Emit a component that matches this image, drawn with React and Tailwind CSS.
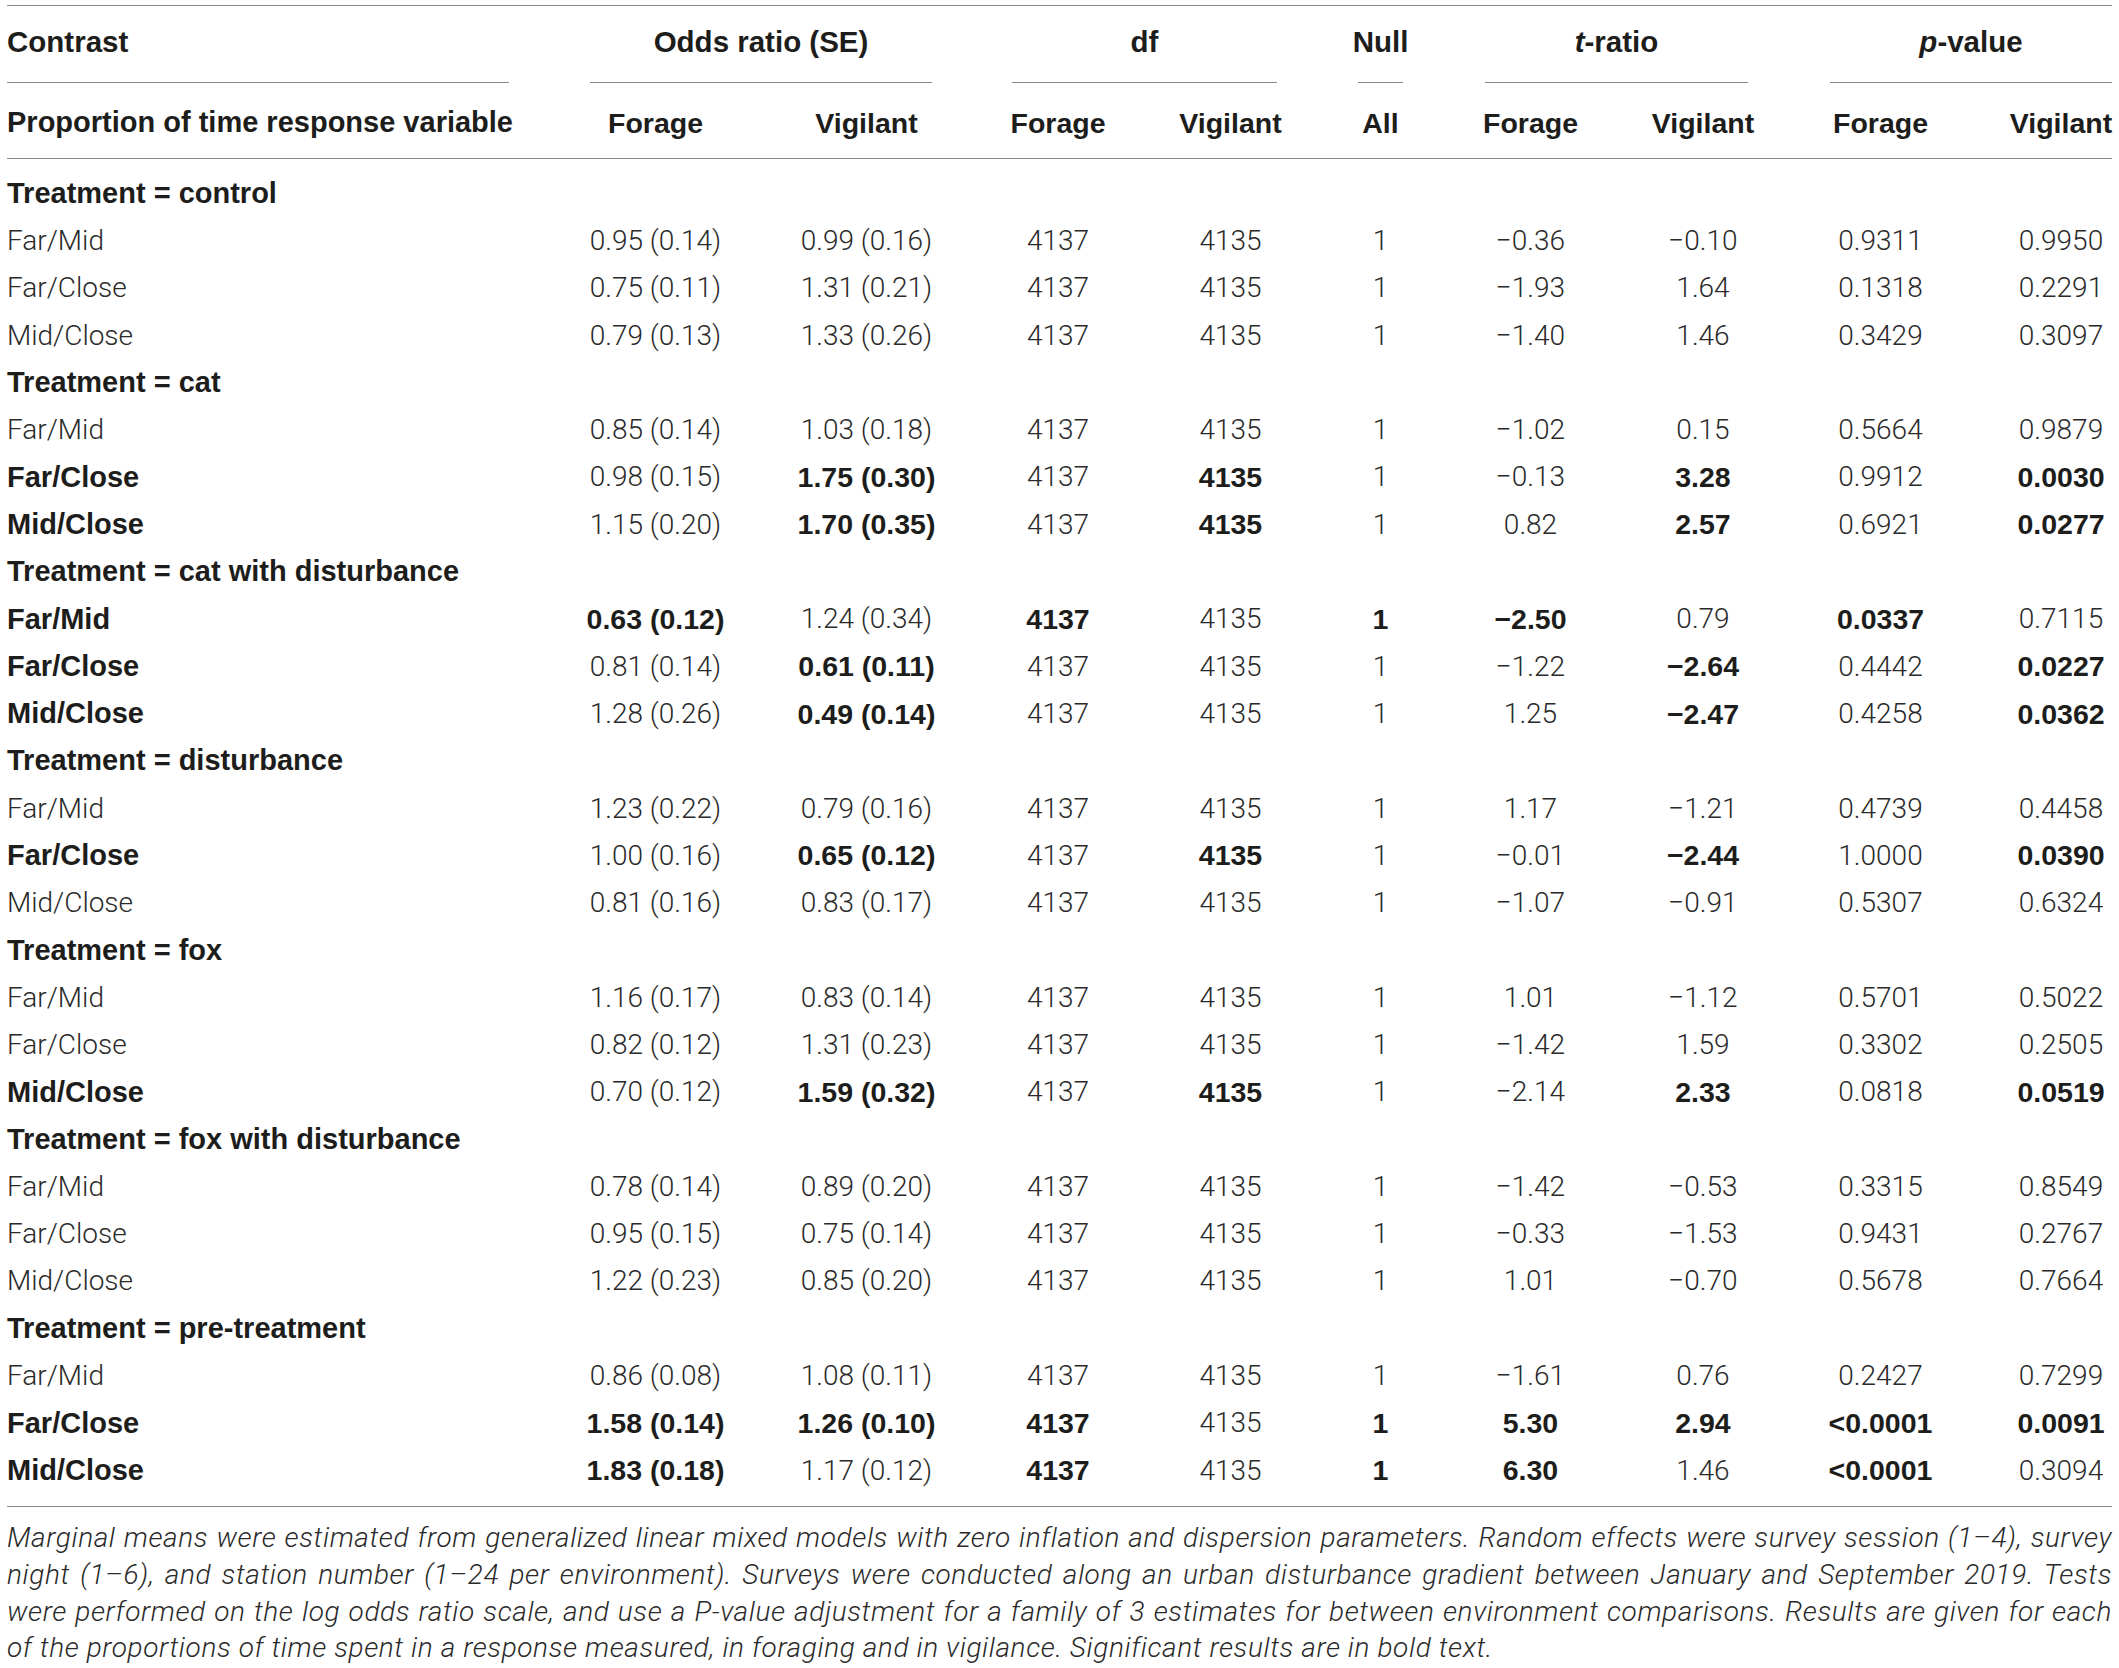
import clsx from "clsx";

const cols =
  "grid grid-cols-[550px_211px_211px_172px_173px_127px_173px_172px_183px_147px]";
const bold = "font-['Liberation_Sans',Arial,sans-serif] font-bold text-[#1d1d1b]";
const light = "font-['Roboto','Liberation_Sans',sans-serif] font-light text-[#2a2a2a]";

// a leading "*" marks a significant (bold) value
const groups = [
  {
    name: "control",
    rows: [
      ["Far/Mid", "0.95 (0.14)", "0.99 (0.16)", "4137", "4135", "1", "−0.36", "−0.10", "0.9311", "0.9950"],
      ["Far/Close", "0.75 (0.11)", "1.31 (0.21)", "4137", "4135", "1", "−1.93", "1.64", "0.1318", "0.2291"],
      ["Mid/Close", "0.79 (0.13)", "1.33 (0.26)", "4137", "4135", "1", "−1.40", "1.46", "0.3429", "0.3097"],
    ],
  },
  {
    name: "cat",
    rows: [
      ["Far/Mid", "0.85 (0.14)", "1.03 (0.18)", "4137", "4135", "1", "−1.02", "0.15", "0.5664", "0.9879"],
      ["*Far/Close", "0.98 (0.15)", "*1.75 (0.30)", "4137", "*4135", "1", "−0.13", "*3.28", "0.9912", "*0.0030"],
      ["*Mid/Close", "1.15 (0.20)", "*1.70 (0.35)", "4137", "*4135", "1", "0.82", "*2.57", "0.6921", "*0.0277"],
    ],
  },
  {
    name: "cat with disturbance",
    rows: [
      ["*Far/Mid", "*0.63 (0.12)", "1.24 (0.34)", "*4137", "4135", "*1", "*−2.50", "0.79", "*0.0337", "0.7115"],
      ["*Far/Close", "0.81 (0.14)", "*0.61 (0.11)", "4137", "4135", "1", "−1.22", "*−2.64", "0.4442", "*0.0227"],
      ["*Mid/Close", "1.28 (0.26)", "*0.49 (0.14)", "4137", "4135", "1", "1.25", "*−2.47", "0.4258", "*0.0362"],
    ],
  },
  {
    name: "disturbance",
    rows: [
      ["Far/Mid", "1.23 (0.22)", "0.79 (0.16)", "4137", "4135", "1", "1.17", "−1.21", "0.4739", "0.4458"],
      ["*Far/Close", "1.00 (0.16)", "*0.65 (0.12)", "4137", "*4135", "1", "−0.01", "*−2.44", "1.0000", "*0.0390"],
      ["Mid/Close", "0.81 (0.16)", "0.83 (0.17)", "4137", "4135", "1", "−1.07", "−0.91", "0.5307", "0.6324"],
    ],
  },
  {
    name: "fox",
    rows: [
      ["Far/Mid", "1.16 (0.17)", "0.83 (0.14)", "4137", "4135", "1", "1.01", "−1.12", "0.5701", "0.5022"],
      ["Far/Close", "0.82 (0.12)", "1.31 (0.23)", "4137", "4135", "1", "−1.42", "1.59", "0.3302", "0.2505"],
      ["*Mid/Close", "0.70 (0.12)", "*1.59 (0.32)", "4137", "*4135", "1", "−2.14", "*2.33", "0.0818", "*0.0519"],
    ],
  },
  {
    name: "fox with disturbance",
    rows: [
      ["Far/Mid", "0.78 (0.14)", "0.89 (0.20)", "4137", "4135", "1", "−1.42", "−0.53", "0.3315", "0.8549"],
      ["Far/Close", "0.95 (0.15)", "0.75 (0.14)", "4137", "4135", "1", "−0.33", "−1.53", "0.9431", "0.2767"],
      ["Mid/Close", "1.22 (0.23)", "0.85 (0.20)", "4137", "4135", "1", "1.01", "−0.70", "0.5678", "0.7664"],
    ],
  },
  {
    name: "pre-treatment",
    rows: [
      ["Far/Mid", "0.86 (0.08)", "1.08 (0.11)", "4137", "4135", "1", "−1.61", "0.76", "0.2427", "0.7299"],
      ["*Far/Close", "*1.58 (0.14)", "*1.26 (0.10)", "*4137", "4135", "*1", "*5.30", "*2.94", "*<0.0001", "*0.0091"],
      ["*Mid/Close", "*1.83 (0.18)", "1.17 (0.12)", "*4137", "4135", "*1", "*6.30", "1.46", "*<0.0001", "0.3094"],
    ],
  },
];

const note = [
  "Marginal means were estimated from generalized linear mixed models with zero inflation and dispersion parameters. Random effects were survey session (1–4), survey",
  "night (1–6), and station number (1–24 per environment). Surveys were conducted along an urban disturbance gradient between January and September 2019. Tests",
  "were performed on the log odds ratio scale, and use a P-value adjustment for a family of 3 estimates for between environment comparisons. Results are given for each",
  "of the proportions of time spent in a response measured, in foraging and in vigilance. Significant results are in bold text.",
];

function Rule() {
  return <div className="mx-[7px] h-px bg-[#8a8a8a]" />;
}

function Value({ v, last, left }) {
  const isBold = v.startsWith("*");
  const text = isBold ? v.slice(1) : v;
  return (
    <div
      className={clsx(
        "flex items-center whitespace-nowrap",
        left ? "pl-[7px]" : "justify-center",
        last && "pl-[31px]",
        isBold ? bold : light,
        isBold && (left ? "text-[29px]" : "text-[28.5px]")
      )}
    >
      {text}
    </div>
  );
}

function SpanHead({ children, className }) {
  return (
    <div
      className={clsx(
        "h-[77px] pb-[4px] flex items-center justify-center border-b border-[#8a8a8a]",
        className
      )}
    >
      {children}
    </div>
  );
}

export default function App() {
  const sub = ["Forage", "Vigilant", "Forage", "Vigilant", "All", "Forage", "Vigilant", "Forage", "Vigilant"];

  return (
    <div className="w-[2119px] min-h-[1668px] bg-white text-[28px] leading-normal">
      <div className="pt-[5px]">
        <Rule />
      </div>

      <div className={clsx(cols, bold, "text-[29.5px]")}>
        <SpanHead className="ml-[7px] mr-[41px] !justify-start">Contrast</SpanHead>
        <SpanHead className="col-span-2 mx-[40px]">Odds ratio (SE)</SpanHead>
        <SpanHead className="col-span-2 mx-[40px]">df</SpanHead>
        <SpanHead className="mx-[41px]">Null</SpanHead>
        <SpanHead className="col-span-2 mx-[41px]">
          <i>t</i>-ratio
        </SpanHead>
        <SpanHead className="col-span-2 ml-[41px] mr-[7px]">
          <i>p</i>-value
        </SpanHead>
      </div>

      <div className={clsx(cols, "h-[75px] pt-[5px]")}>
        <Value v="*Proportion of time response variable" left />
        {sub.map((s, i) => (
          <Value key={i} v={"*" + s} left={false} last={i === 8} />
        ))}
      </div>
      <Rule />

      <div className="pt-[11px] pb-[12px]">
        {groups.map((g) => (
          <div key={g.name}>
            <div className={clsx("h-[47.3px] flex items-center pl-[7px] text-[29px]", bold)}>
              Treatment = {g.name}
            </div>
            {g.rows.map((r, j) => (
              <div key={j} className={clsx(cols, "h-[47.3px]")}>
                {r.map((v, k) => (
                  <Value key={k} v={v} left={k === 0} last={k === 9} />
                ))}
              </div>
            ))}
          </div>
        ))}
      </div>
      <Rule />

      <div className="px-[7px] pt-[13px] text-[28px] tracking-[0.6px] leading-[36.7px] italic font-['Roboto','Liberation_Sans',sans-serif] font-light text-[#2a2a2a]">
        {note.map((line, i) => (
          <div
            key={i}
            className={clsx(
              "whitespace-nowrap",
              i < note.length - 1 && "text-justify [text-align-last:justify] [word-spacing:-4px]"
            )}
          >
            {line}
          </div>
        ))}
      </div>
    </div>
  );
}
